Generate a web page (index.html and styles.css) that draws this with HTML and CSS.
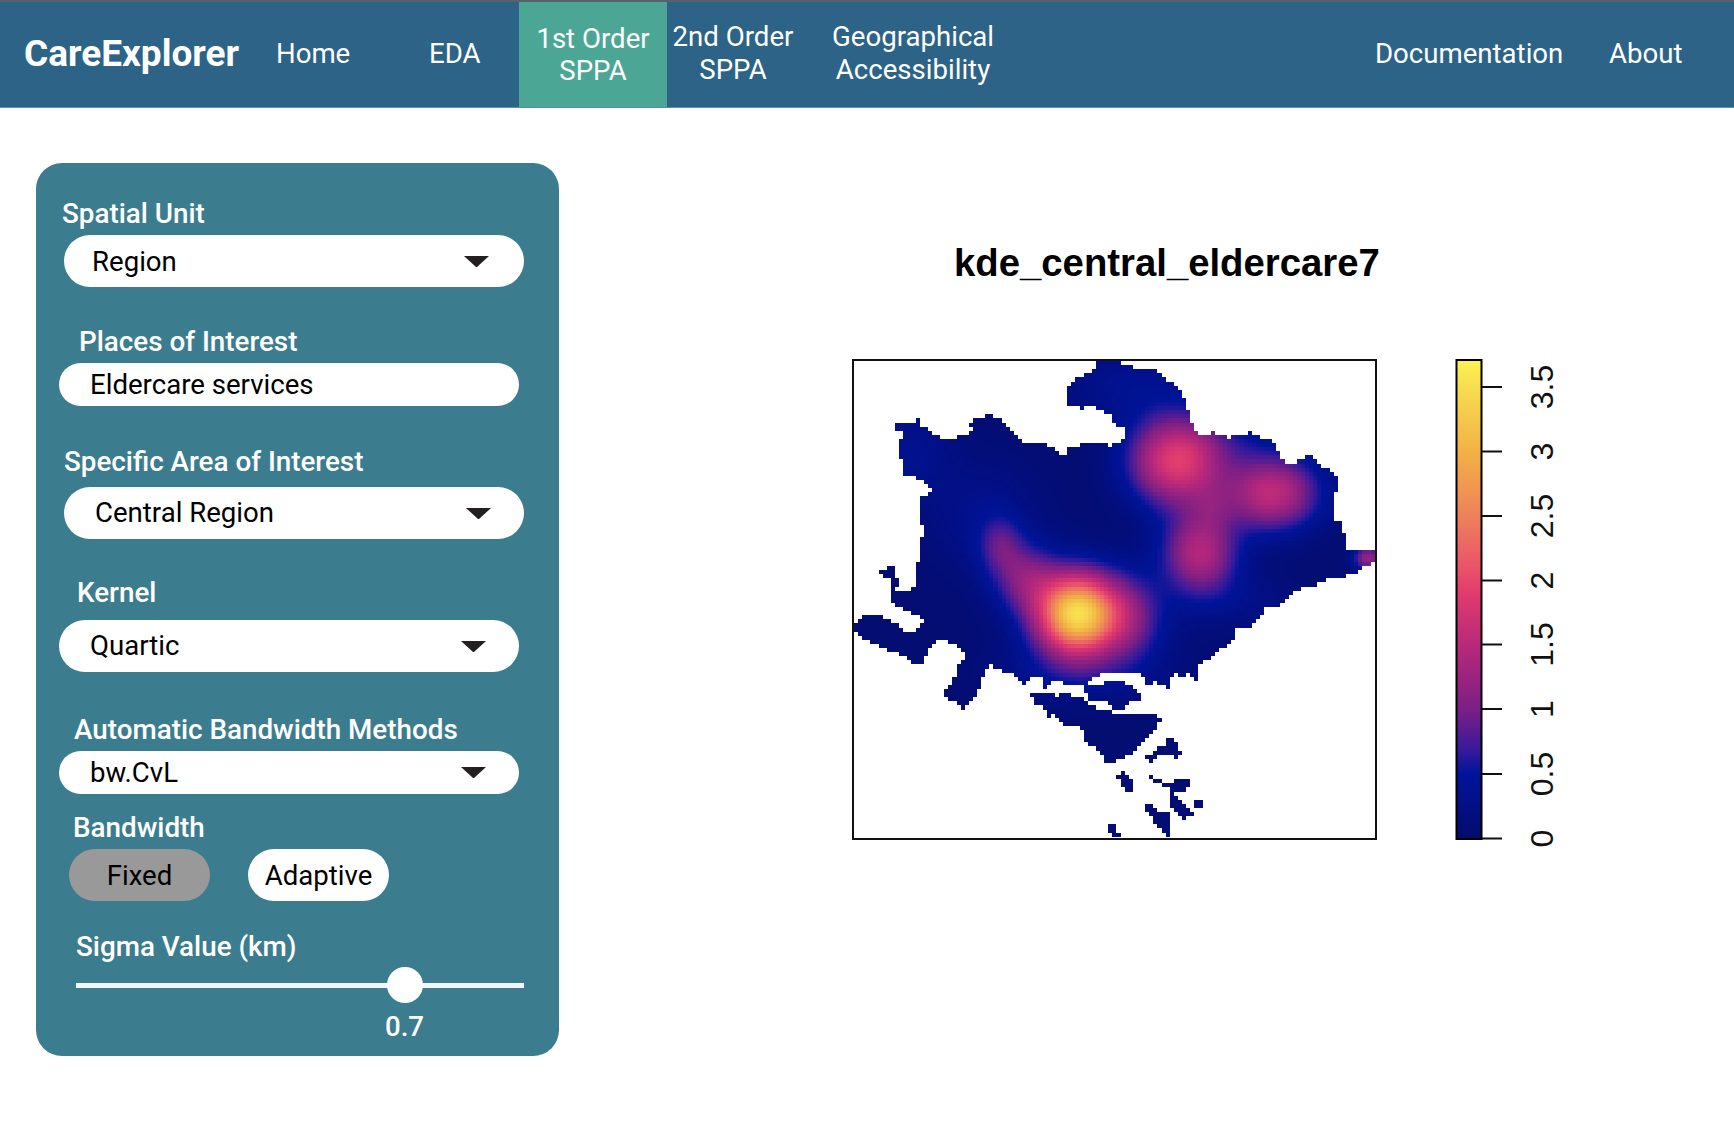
FILE: index.html
```html
<!DOCTYPE html>
<html lang="en">
<head>
<meta charset="utf-8">
<title>CareExplorer</title>
<link rel="stylesheet" href="styles.css">
</head>
<body>
<nav class="nav">
  <a class="brand">CareExplorer</a>
  <a class="link link-home">Home</a>
  <a class="link link-eda">EDA</a>
  <a class="link link-first active">1st Order<br>SPPA</a>
  <a class="link link-second">2nd Order<br>SPPA</a>
  <a class="link link-geo">Geographical<br>Accessibility</a>
  <a class="link link-docs">Documentation</a>
  <a class="link link-about">About</a>
</nav>
<main class="main">
  <aside class="panel">
    <label class="label l-spatial">Spatial Unit</label>
    <div class="control tall c-a"><span class="value v-region">Region</span><svg class="arrow a-region" viewBox="0 0 25 11"><path d="M0 0H25L13 11H12Z"/></svg></div>
    <label class="label l-places">Places of Interest</label>
    <div class="control short c-b"><span class="value v-std">Eldercare services</span></div>
    <label class="label l-area">Specific Area of Interest</label>
    <div class="control tall c-a"><span class="value v-central">Central Region</span><svg class="arrow a-central" viewBox="0 0 25 11"><path d="M0 0H25L13 11H12Z"/></svg></div>
    <label class="label l-kernel">Kernel</label>
    <div class="control tall c-b"><span class="value v-std">Quartic</span><svg class="arrow a-std" viewBox="0 0 25 11"><path d="M0 0H25L13 11H12Z"/></svg></div>
    <label class="label l-auto">Automatic Bandwidth Methods</label>
    <div class="control short c-b"><span class="value v-std">bw.CvL</span><svg class="arrow a-std" viewBox="0 0 25 11"><path d="M0 0H25L13 11H12Z"/></svg></div>
    <label class="label l-band">Bandwidth</label>
    <div class="toggle">
      <button class="pill selected">Fixed</button>
      <button class="pill">Adaptive</button>
    </div>
    <label class="label l-sigma">Sigma Value (km)</label>
    <div class="slider">
      <div class="track"></div>
      <div class="thumb"></div>
    </div>
    <div class="slider-value">0.7</div>
  </aside>
  <section class="plot">
    <h1 class="plot-title">kde_central_eldercare7</h1>
    <div class="plot-row">
      <div class="map-frame"><canvas id="map" class="map" width="521" height="477"></canvas></div>
      <svg class="legend" width="110" height="500" viewBox="0 0 110 500">
        <defs>
          <linearGradient id="ramp" x1="0" y1="1" x2="0" y2="0">
            <stop offset="0" stop-color="#040c6c"/>
            <stop offset="0.08" stop-color="#02108a"/>
            <stop offset="0.135" stop-color="#00149a"/>
            <stop offset="0.19" stop-color="#3a1a9a"/>
            <stop offset="0.27" stop-color="#7b1f85"/>
            <stop offset="0.40" stop-color="#b8287a"/>
            <stop offset="0.51" stop-color="#e03a6e"/>
            <stop offset="0.56" stop-color="#e9506a"/>
            <stop offset="0.67" stop-color="#ee7f5c"/>
            <stop offset="0.81" stop-color="#f2b245"/>
            <stop offset="0.94" stop-color="#f7dc4f"/>
            <stop offset="1" stop-color="#fff252"/>
          </linearGradient>
        </defs>
        <rect class="legend-bar" x="1.5" y="1" width="25" height="479"/>
        <path class="legend-ticks" d="M27 28H47M27 92.500H47M27 157H47M27 221.500H47M27 285.500H47M27 350H47M27 415H47M27 479.500H47"/>
        <text class="legend-label" transform="translate(98 28) rotate(-90)">3.5</text>
        <text class="legend-label" transform="translate(98 92.500) rotate(-90)">3</text>
        <text class="legend-label" transform="translate(98 157) rotate(-90)">2.5</text>
        <text class="legend-label" transform="translate(98 221.500) rotate(-90)">2</text>
        <text class="legend-label" transform="translate(98 285.500) rotate(-90)">1.5</text>
        <text class="legend-label" transform="translate(98 350) rotate(-90)">1</text>
        <text class="legend-label" transform="translate(98 415) rotate(-90)">0.5</text>
        <text class="legend-label" transform="translate(98 479.500) rotate(-90)">0</text>
      </svg>
    </div>
  </section>
</main>
<script src="map.js"></script>
</body>
</html>
```
FILE: styles.css
```css
* { box-sizing: border-box; }
html, body { margin: 0; padding: 0; }
body { background: #fff; font-family: Roboto, "Noto Sans", sans-serif; width: 1734px; height: 1124px; overflow: hidden; }

.nav { display: flex; align-items: center; height: 108px; background: #2c6387; border-top: 2px solid #56636c; border-bottom: 1px solid #5b90ac; color: #fff; padding: 0 52px 0 24px; }
.brand { font-size: 37px; font-weight: 700; width: 213px; white-space: nowrap; margin-top: -3px; }
.link { font-size: 27.6px; line-height: 33px; text-align: center; white-space: nowrap; display: block; margin-top: -2px; }
.link-home { margin-left: 39px; width: 74px; }
.link-eda { margin-left: 79px; width: 51px; }
.link-first { margin-left: 39px; width: 148px; height: 105px; margin-top: 0; padding-top: 21px; line-height: 32px; background: #4ca695; }
.link-second { width: 132px; margin-top: -4px; }
.link-geo { margin-left: 33px; width: 162px; margin-top: -4px; }
.link-docs { margin-left: auto; width: 188px; }
.link-about { margin-left: 46px; width: 73px; }

.main { display: flex; align-items: flex-start; }
.panel { width: 523px; margin: 55px 0 0 36px; padding: 36px 0 14px; background: #3b7d8f; border-radius: 26px; color: #fff; }
.label { display: block; font-size: 27.8px; font-weight: 500; line-height: 30px; white-space: nowrap; }
.l-spatial { margin-left: 26px; margin-bottom: 6px; }
.l-places { margin: 40px 0 6px 43px; }
.l-area { margin: 41px 0 10px 28px; }
.l-kernel { margin: 39px 0 12px 41px; }
.l-auto { margin: 43px 0 6px 38px; }
.l-band { margin: 19px 0 6px 37px; }
.l-sigma { margin: 31px 0 5px 40px; }

.control { display: flex; align-items: center; width: 460px; background: #fff; color: #000; font-size: 27.6px; }
.tall { height: 52px; border-radius: 26px; }
.short { height: 43px; border-radius: 22px; }
.c-a { margin-left: 28px; }
.c-b { margin-left: 23px; }
.value { white-space: nowrap; }
.v-region { margin-left: 28px; padding-top: 1px; }
.v-central { margin-left: 31px; padding-bottom: 2px; }
.v-std { margin-left: 31px; }
.tall .v-std { padding-bottom: 2px; margin-left: 31px; }
.arrow { width: 25px; height: 11px; margin-left: auto; fill: #231f20; }
.a-region { margin-right: 35px; }
.a-central { margin-right: 33px; }
.a-std { margin-right: 33px; }

.toggle { display: flex; gap: 38px; margin-left: 33px; }
.pill { width: 141px; height: 52px; border: 0; border-radius: 26px; background: #fff; color: #000; font: 400 27.6px Roboto, sans-serif; padding: 0; }
.pill.selected { background: #999; }

.slider { position: relative; height: 36px; margin-left: 40px; width: 448px; display: flex; align-items: center; }
.track { width: 100%; height: 5px; background: #f2f6f7; }
.thumb { position: absolute; left: 311px; top: 0; width: 36px; height: 36px; border-radius: 50%; background: #fff; }
.slider-value { font-size: 27.6px; font-weight: 500; line-height: 30px; margin: 9px 0 0 349px; }

.plot { margin: 0 0 0 293px; }
.plot-title { margin: 133px 0 74px 102px; font: 700 38.3px/44px "Liberation Sans", Arial, sans-serif; color: #000; white-space: nowrap; }
.plot-row { display: flex; align-items: flex-start; gap: 78px; }
.map-frame { width: 525px; height: 481px; border: 2px solid #111; background: #fff; }
.map { display: block; width: 521px; height: 477px; filter: blur(0.5px); }
.legend { overflow: visible; display: block; }
.legend-bar { fill: url(#ramp); stroke: #000; stroke-width: 2; }
.legend-ticks { fill: none; stroke: #111; stroke-width: 2; }
.legend-label { font: 400 32px "Liberation Sans", Arial, sans-serif; fill: #111; text-anchor: middle; }
```
FILE: map.js
```js
(function () {
  // Outlines traced from the source raster. "a" coordinates map y from 350, "b" from 600.
  var a = function (x, y) { return [x / 2.8 - 12, 350 + y / 3 - 361]; };
  var b = function (x, y) { return [x / 2.8 - 12, 600 + y / 3 - 361]; };
  function pts(list, f) { var r = []; for (var i = 0; i < list.length; i += 2) r.push(f(list[i], list[i + 1])); return r; }

  var mainland = pts([716,30,760,30,780,42,818,55,875,65,900,78,925,105,945,122,945,145,967,145,967,190,978,200,980,232,990,235,992,257,1028,257,1030,245,1058,260,1082,265,1130,257,1135,245,1162,257,1185,268,1210,280,1222,312,1232,335,1265,345,1272,330,1300,322,1310,312,1325,330,1345,347,1368,368,1380,380,1392,405,1392,423,1380,423,1380,515,1392,517,1403,538,1405,578,1415,603,1462,603,1465,595,1495,595,1500,620,1490,635,1462,650,1440,672,1370,683,1340,693,1312,708,1275,715,1240,745,1222,768], a)
    .concat(pts([1185,25,1165,60,1125,85,1095,78,1095,122,1070,140,1045,160,1015,185,990,205,1000,232,990,235,978,222,945,225,925,200,918,265,905,262,880,240,820,215,735,215,695,240,680,245,665,248,600,245,578,230,555,228,525,230,515,258,495,235,480,213,435,210,420,190,405,205,380,270,365,295,340,325,325,310,280,285,300,265,320,230,330,180,345,175,345,155,320,138,285,112,260,118,240,155,225,180,215,200,175,170,150,155,120,145,85,125,60,110,32,85,32,75,50,55,65,45,105,45,130,65,165,80,175,100,210,98,220,70,230,60,205,42,170,25,140,5], b))
    .concat(pts([130,740,140,735,140,715,175,725,197,725,207,705,207,635,220,635,220,560,230,555,230,522,220,520,220,447,235,435,255,418,240,405,200,378,165,367,175,355,175,333,162,330,162,265,185,262,172,245,152,243,152,220,197,220,200,210,218,210,220,232,240,233,270,265,325,265,345,255,368,240,358,213,393,210,395,198,425,198,428,210,450,213,495,260,498,275,565,278,580,293,600,300,610,322,633,322,633,300,645,290,668,290,672,278,738,278,740,288,760,288,763,278,782,275,795,255,795,232,775,232,755,200,725,178,682,165,680,178,668,178,668,165,633,165,633,120,645,95,658,85,680,75,703,65,716,55], a));

  var shapes = [mainland,
    pts([105,660,128,660,130,648,142,648,150,662,150,682,162,685,162,708,142,712,140,690,118,680,105,672], a),
    pts([680,245,700,262,740,250,795,248,820,270,840,295,800,310,790,325,760,325,750,305,695,300,680,280], b),
    pts([530,282,575,282,600,290,630,282,650,298,670,295,695,320,760,338,830,340,860,348,865,338,887,350,887,370,865,400,835,438,805,468,772,470,770,485,738,485,735,460,695,435,682,420,682,392,650,375,635,380,600,345,560,315,540,312], b),
    pts([565,328,578,328,590,345,578,348], b),
    pts([565,232,578,232,578,260,565,260], b),
    pts([850,230,875,230,875,258,852,258], b),
    pts([910,420,932,418,945,450,957,452,945,470,925,470,920,460,890,460,875,480,852,482,852,472,875,450,890,438,910,435], b),
    pts([772,518,795,518,800,535,818,540,818,572,795,572,782,550], b),
    pts([862,530,875,530,875,540,900,550,978,540,975,552,955,572,945,572,932,562,932,595,950,595,965,620,990,645,968,650,962,662,945,650,922,620,912,602,922,590,922,572,900,552,875,550,862,538], b),
    pts([978,607,1012,605,1012,628,990,628], b),
    pts([852,618,875,618,885,635,900,640,905,630,920,650,912,672,922,680,920,695,900,695,875,665,870,645,852,635], b),
    pts([910,695,922,695,922,708,910,708], b),
    pts([750,675,762,675,762,695,782,698,782,710,762,712,760,700,750,695], b)
  ];

  // Density peaks in page coordinates: x, y, height, spread x, spread y.
  var peaks = [
    [1077, 614, 3.30, 28, 28],
    [1177, 461, 1.85, 33, 31],
    [1272, 493, 1.50, 33, 26],
    [1200, 553, 1.35, 26, 28],
    [1130, 618, 0.75, 24, 30],
    [1000, 545, 0.55, 15, 20],
    [1025, 578, 0.85, 22, 24],
    [1368, 558, 1.15, 10, 9],
    [1212, 508, 0.25, 14, 16],
    [985, 517, 0.28, 40, 40],
    [912, 450, 0.28, 30, 34],
    [1130, 385, 0.30, 50, 26],
    [1078, 672, 0.30, 55, 20],
    [1100, 620, 0.12, 70, 45],
    [1240, 600, 0.20, 40, 20],
    [1240, 440, 0.18, 40, 16]
  ];

  var ramp = [
    [0, 4, 12, 108], [0.30, 2, 16, 138], [0.50, 0, 20, 154], [0.70, 58, 26, 154], [1.0, 123, 31, 133],
    [1.5, 184, 40, 122], [1.9, 224, 58, 110], [2.1, 233, 80, 106], [2.5, 238, 127, 92], [3.0, 242, 178, 69],
    [3.5, 247, 220, 79], [3.72, 255, 242, 82]
  ];
  function colour(v) {
    for (var i = 1; i < ramp.length; i++) {
      if (v <= ramp[i][0]) {
        var p = ramp[i - 1], q = ramp[i], t = (v - p[0]) / (q[0] - p[0]);
        return [p[1] + (q[1] - p[1]) * t, p[2] + (q[2] - p[2]) * t, p[3] + (q[3] - p[3]) * t];
      }
    }
    return ramp[ramp.length - 1].slice(1);
  }

  var cell = 4.1, originX = 854, originY = 361;
  var target = document.getElementById('map');
  var cols = Math.ceil(target.width / cell), rows = Math.ceil(target.height / cell);
  var low = document.createElement('canvas');
  low.width = cols; low.height = rows;
  var lc = low.getContext('2d');
  lc.fillStyle = '#000';
  shapes.forEach(function (shape) {
    lc.beginPath();
    shape.forEach(function (p, i) {
      var x = p[0] / cell, y = p[1] / cell;
      if (i) lc.lineTo(x, y); else lc.moveTo(x, y);
    });
    lc.closePath();
    lc.fill();
  });
  var img = lc.getImageData(0, 0, cols, rows), d = img.data;
  for (var r = 0; r < rows; r++) {
    for (var c = 0; c < cols; c++) {
      var k = (r * cols + c) * 4;
      if (d[k + 3] < 85) { d[k] = d[k + 1] = d[k + 2] = 255; d[k + 3] = 0; continue; }
      var px = originX + (c + 0.5) * cell, py = originY + (r + 0.5) * cell, v = 0.05;
      peaks.forEach(function (g) {
        var dx = (px - g[0]) / g[3], dy = (py - g[1]) / g[4];
        v += g[2] * Math.exp(-0.5 * (dx * dx + dy * dy));
      });
      var col = colour(v);
      d[k] = col[0]; d[k + 1] = col[1]; d[k + 2] = col[2]; d[k + 3] = 255;
    }
  }
  lc.putImageData(img, 0, 0);
  var ctx = target.getContext('2d');
  ctx.imageSmoothingEnabled = false;
  ctx.drawImage(low, 0, 0, cols * cell, rows * cell);
})();
```
